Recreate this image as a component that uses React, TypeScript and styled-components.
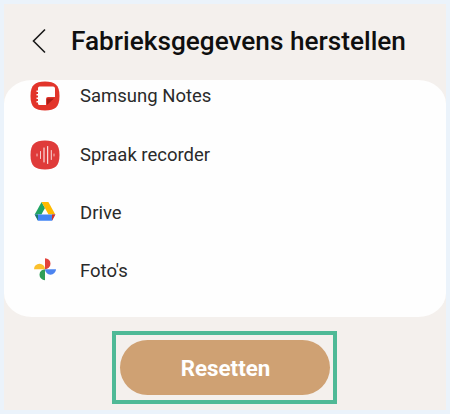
import styled, { createGlobalStyle } from 'styled-components';

const GlobalStyle = createGlobalStyle`
  html, body {
    margin: 0;
    padding: 0;
    background: #ebf3fb;
  }
  body {
    font-family: Roboto, "Liberation Sans", sans-serif;
  }
`;

const Screen = styled.div`
  box-sizing: border-box;
  width: 442px;
  height: 406px;
  margin: 4px;
  background: #f4f0ed;
  display: flex;
  flex-direction: column;
`;

const Header = styled.header`
  box-sizing: border-box;
  height: 76px;
  display: flex;
  align-items: center;
  padding: 0 0 3px 27px;
  gap: 23px;
  flex-shrink: 0;
`;

const BackButton = styled.button`
  width: 17px;
  height: 26px;
  padding: 0;
  border: 0;
  background: none;
  display: flex;
`;

const Title = styled.h1`
  margin: 0;
  font-size: 26.2px;
  font-weight: 500;
  color: #0f0f0f;
  white-space: nowrap;
`;

const Card = styled.section`
  height: 237px;
  background: #fefefe;
  border-radius: 28px / 24px;
  overflow: hidden;
  flex-shrink: 0;
`;

const AppList = styled.ul`
  list-style: none;
  margin: -13px 0 0;
  padding: 0;
`;

const AppRow = styled.li`
  height: 58.4px;
  display: flex;
  align-items: center;
  padding-left: 26px;
  gap: 20px;
  font-size: 18.5px;
  color: #2a2a2a;
`;

const IconSlot = styled.span`
  width: 30px;
  height: 30px;
  display: flex;
`;

const Footer = styled.footer`
  display: flex;
  justify-content: flex-start;
  padding: 14px 0 0 108px;
`;

const Frame = styled.div`
  box-sizing: border-box;
  width: 225px;
  height: 73px;
  border: 4px solid #4fb996;
  padding: 5px 3px 5px 4px;
`;

const ResetButton = styled.button`
  width: 210px;
  height: 100%;
  border: 0;
  border-radius: 28px;
  background: #cfa173;
  color: #fff;
  font-family: inherit;
  font-size: 22.3px;
  font-weight: 700;
  padding: 0 0 0 1px;
`;

function NotesIcon() {
  return (
    <svg viewBox="0 0 30 30" width="30" height="30">
      <path d="M15 0.500C25 0.500 29.500 4 29.500 15S25 29.500 15 29.500 0.500 26 0.500 15 5 0.500 15 0.500Z" fill="#e2352b" />
      <path
        d="M9.500 5.500H23a2 2 0 0 1 2 2V16H18a2 2 0 0 0-2 2v6H9.500A1.500 1.500 0 0 1 8 22.500V21.500H6.500V20H8V18H6.500V16.500H8V14.500H6.500V13H8V11H6.500V9.500H8V7A1.500 1.500 0 0 1 9.500 5.500Z"
        fill="#fff"
      />
      <path d="M17 17.500H24L17 24Z" fill="#a81f18" />
    </svg>
  );
}

function RecorderIcon() {
  return (
    <svg viewBox="0 0 30 30" width="30" height="30">
      <path d="M15 0.500C25 0.500 29.500 4 29.500 15S25 29.500 15 29.500 0.500 26 0.500 15 5 0.500 15 0.500Z" fill="#df3b3a" />
      <g stroke="#fff" strokeLinecap="round" fill="none" strokeWidth="1">
        <path d="M7 14v2" strokeOpacity="0.7" />
        <path d="M10.500 11.500v7" strokeOpacity="0.75" />
        <path d="M14 8v14" />
        <path d="M17.700 6.500v17" />
        <path d="M21.300 10.500v9" strokeOpacity="0.8" />
        <path d="M24 14v2" strokeOpacity="0.7" />
      </g>
    </svg>
  );
}

function DriveIcon() {
  return (
    <svg viewBox="0 0 30 30" width="30" height="30">
      <polygon points="11.600,4 15,9.900 11.400,16.500 4.700,16.500" fill="#1fa463" />
      <polygon points="11.600,4 18.400,4 25.300,16.500 18.500,16.500" fill="#ffba00" />
      <polygon points="4.700,16.500 25.300,16.500 22,22.700 8,22.700" fill="#4285f4" />
      <polygon points="4.700,16.500 8,16.500 8,22.700" fill="#1f7a6b" />
      <polygon points="22,16.500 25.300,16.500 22,22.700" fill="#d93025" />
    </svg>
  );
}

function PhotosIcon() {
  return (
    <svg viewBox="0 0 30 30" width="30" height="30">
      <path d="M15 13.200V2.200a5.500 5.500 0 0 1 0 11Z" fill="#e2423a" />
      <path d="M15 13.200h11a5.500 5.500 0 0 1-11 0Z" fill="#4c84f0" />
      <path d="M15 13.200v11a5.500 5.500 0 0 1 0-11Z" fill="#2f9e57" />
      <path d="M15 13.200H4a5.500 5.500 0 0 1 11 0Z" fill="#fbc02d" />
    </svg>
  );
}

const apps = [
  { name: 'Samsung Notes', icon: <NotesIcon /> },
  { name: 'Spraak recorder', icon: <RecorderIcon /> },
  { name: 'Drive', icon: <DriveIcon /> },
  { name: "Foto's", icon: <PhotosIcon /> },
];

function App() {
  return (
    <Screen>
      <GlobalStyle />
      <Header>
        <BackButton aria-label="Terug">
          <svg viewBox="0 0 17 26" width="17" height="26" fill="none">
            <path d="M14 1.500 2.500 13 14 24.500" stroke="#1a1a1a" strokeWidth="1.600" />
          </svg>
        </BackButton>
        <Title>Fabrieksgegevens herstellen</Title>
      </Header>
      <Card>
        <AppList>
          {apps.map((app) => (
            <AppRow key={app.name}>
              <IconSlot>{app.icon}</IconSlot>
              {app.name}
            </AppRow>
          ))}
        </AppList>
      </Card>
      <Footer>
        <Frame>
          <ResetButton>Resetten</ResetButton>
        </Frame>
      </Footer>
    </Screen>
  );
}

export default App;
